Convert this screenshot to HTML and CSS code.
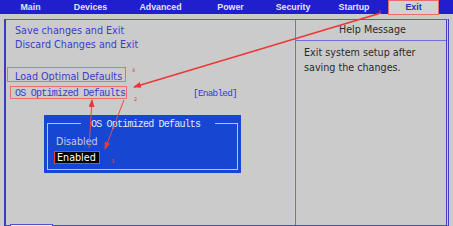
FILE: index.html
```html
<!DOCTYPE html>
<html>
<head>
<meta charset="utf-8">
<link rel="stylesheet" href="styles.css">
</head>
<body>
<div class="screen">
  <div class="menubar">
    <div class="tab">Main</div>
    <div class="tab">Devices</div>
    <div class="tab">Advanced</div>
    <div class="tab">Power</div>
    <div class="tab">Security</div>
    <div class="tab">Startup</div>
    <div class="tab active">Exit</div>
  </div>
  <div class="frame">
    <div class="left">
      <div class="group">
        <div class="item">Save changes and Exit</div>
        <div class="item">Discard Changes and Exit</div>
      </div>
      <div class="group second">
        <div class="item">Load Optimal Defaults</div>
        <div class="row">
          <span class="mono">OS Optimized Defaults</span>
          <span class="mono value">[Enabled]</span>
        </div>
      </div>
      <div class="dialog">
        <fieldset class="box">
          <legend class="title">OS Optimized Defaults</legend>
          <div class="opt">Disabled</div>
          <div class="opt sel"><span>Enabled</span></div>
        </fieldset>
      </div>
      <div class="sliver"></div>
    </div>
    <div class="right">
      <div class="help-head">Help Message</div>
      <div class="help-body">Exit system setup after<br>saving the changes.</div>
    </div>
  </div>
  <svg class="notes" width="453" height="226" viewBox="0 0 453 226">
    <defs>
      <marker id="ah" markerUnits="userSpaceOnUse" markerWidth="8" markerHeight="6" refX="7" refY="3" orient="auto">
        <path d="M0,0 L8,3 L0,6 z" fill="#ee3535"/>
      </marker>
    </defs>
    <rect x="7.5" y="67.5" width="118" height="14" fill="none" stroke="#ef6d6d" stroke-width="1"/>
    <rect x="10.5" y="86.5" width="116" height="12" fill="none" stroke="#ef6d6d" stroke-width="1"/>
    <line x1="381" y1="13" x2="134" y2="87" stroke="#ee3535" stroke-width="1.4" marker-end="url(#ah)"/>
    <line x1="89" y1="148" x2="92" y2="100" stroke="#ee4545" stroke-width="1" marker-end="url(#ah)"/>
    <line x1="124" y1="100" x2="105" y2="149" stroke="#ee4545" stroke-width="1" marker-end="url(#ah)"/>
    <text x="378" y="14" class="num">1</text>
    <text x="132" y="72" class="num">4</text>
    <text x="134" y="101" class="num">2</text>
    <text x="111" y="163" class="num">3</text>
  </svg>
</div>
</body>
</html>
```
FILE: styles.css
```css
html, body {
  margin: 0;
  padding: 0;
  background: #cbcbcb;
}
.screen {
  position: relative;
  width: 453px;
  height: 226px;
  overflow: hidden;
  background: #cbcbcb;
}
.menubar {
  display: flex;
  height: 14px;
  background: #1f1fcd;
  font-family: "Liberation Sans", Arial, sans-serif;
  font-weight: bold;
  font-size: 8.8px;
  color: #e4e4f2;
}
.tab {
  line-height: 14px;
  text-align: center;
}
.tab:nth-child(1) { width: 61px; }
.tab:nth-child(2) { width: 59px; }
.tab:nth-child(3) { width: 81px; }
.tab:nth-child(4) { width: 59px; }
.tab:nth-child(5) { width: 66px; }
.tab:nth-child(6) { width: 56px; }
.tab.active {
  width: 51px;
  margin-left: 6px;
  box-sizing: border-box;
  height: 15px;
  margin-top: 0;
  background: #d2d2d2;
  color: #2c2cc8;
  border: 1px solid #ec6b6b;
  line-height: 13px;
}
.frame {
  margin: 5px 0 0 4px;
  width: 445px;
  height: 207px;
  box-sizing: border-box;
  border-top: 1px solid #5a5ad2;
  border-bottom: 1px solid #4a4ad0;
  border-left: 2px solid #3a3ac8;
  border-right: 3px double #4040c8;
  display: flex;
  font-family: "DejaVu Sans", Verdana, sans-serif;
  font-size: 9.6px;
}
.left {
  position: relative;
  flex: 1;
  padding: 4px 0 0 9px;
  border-right: 1px solid #7070d8;
}
.item {
  line-height: 14px;
  color: #3b3bd0;
  white-space: nowrap;
}
.group.second {
  margin-top: 18px;
}
.row {
  display: grid;
  grid-template-columns: 178px auto;
  margin-top: 3px;
  line-height: 14px;
  color: #3b3bd0;
}
.mono {
  font-family: "Liberation Mono", "Courier New", monospace;
  font-size: 10px;
  letter-spacing: -0.75px;
  white-space: nowrap;
}
.mono.value {
  font-size: 9.4px;
  letter-spacing: -0.75px;
  color: #3535e0;
}
.dialog {
  position: absolute;
  left: 38px;
  top: 95px;
  width: 197px;
  height: 58px;
  box-sizing: border-box;
  padding: 2px 3px 3px 3px;
  background: #1646d2;
}
.box {
  margin: 0;
  height: 100%;
  box-sizing: border-box;
  border: 1px solid #b9c4ea;
  padding: 0 0 0 7px;
}
.title {
  margin-left: 26px;
  padding: 3px 15px 0 10px;
  line-height: 10px;
  font-family: "Liberation Mono", "Courier New", monospace;
  font-size: 10px;
  letter-spacing: -0.8px;
  color: #e6e8f4;
  white-space: nowrap;
}
.opt {
  line-height: 15px;
  color: #c8cce0;
  padding-left: 1px;
  margin-top: 4px;
}
.opt.sel {
  margin-top: 2px;
  line-height: 11px;
}
.opt.sel span {
  display: inline-block;
  margin-left: -2px;
  padding: 0 3px 0 2px;
  background: #000;
  color: #fff;
  border: 1px solid #e24040;
  line-height: 11px;
}
.sliver {
  position: absolute;
  left: 4px;
  bottom: -3px;
  width: 43px;
  height: 4px;
  box-sizing: border-box;
  border: 1px solid #5050c8;
  background: #eef0fa;
}
.right {
  width: 150px;
  display: flex;
  flex-direction: column;
  color: #2a2a2a;
}
.help-head {
  height: 20px;
  line-height: 20px;
  text-align: center;
  padding-left: 3px;
  border-bottom: 1px solid #7070d8;
}
.help-body {
  padding: 4px 0 0 8px;
  line-height: 15px;
  white-space: nowrap;
}
.notes {
  position: absolute;
  left: 0;
  top: 0;
  pointer-events: none;
}
.num {
  font-family: "DejaVu Sans", sans-serif;
  font-size: 5px;
  fill: #e04040;
}
```
